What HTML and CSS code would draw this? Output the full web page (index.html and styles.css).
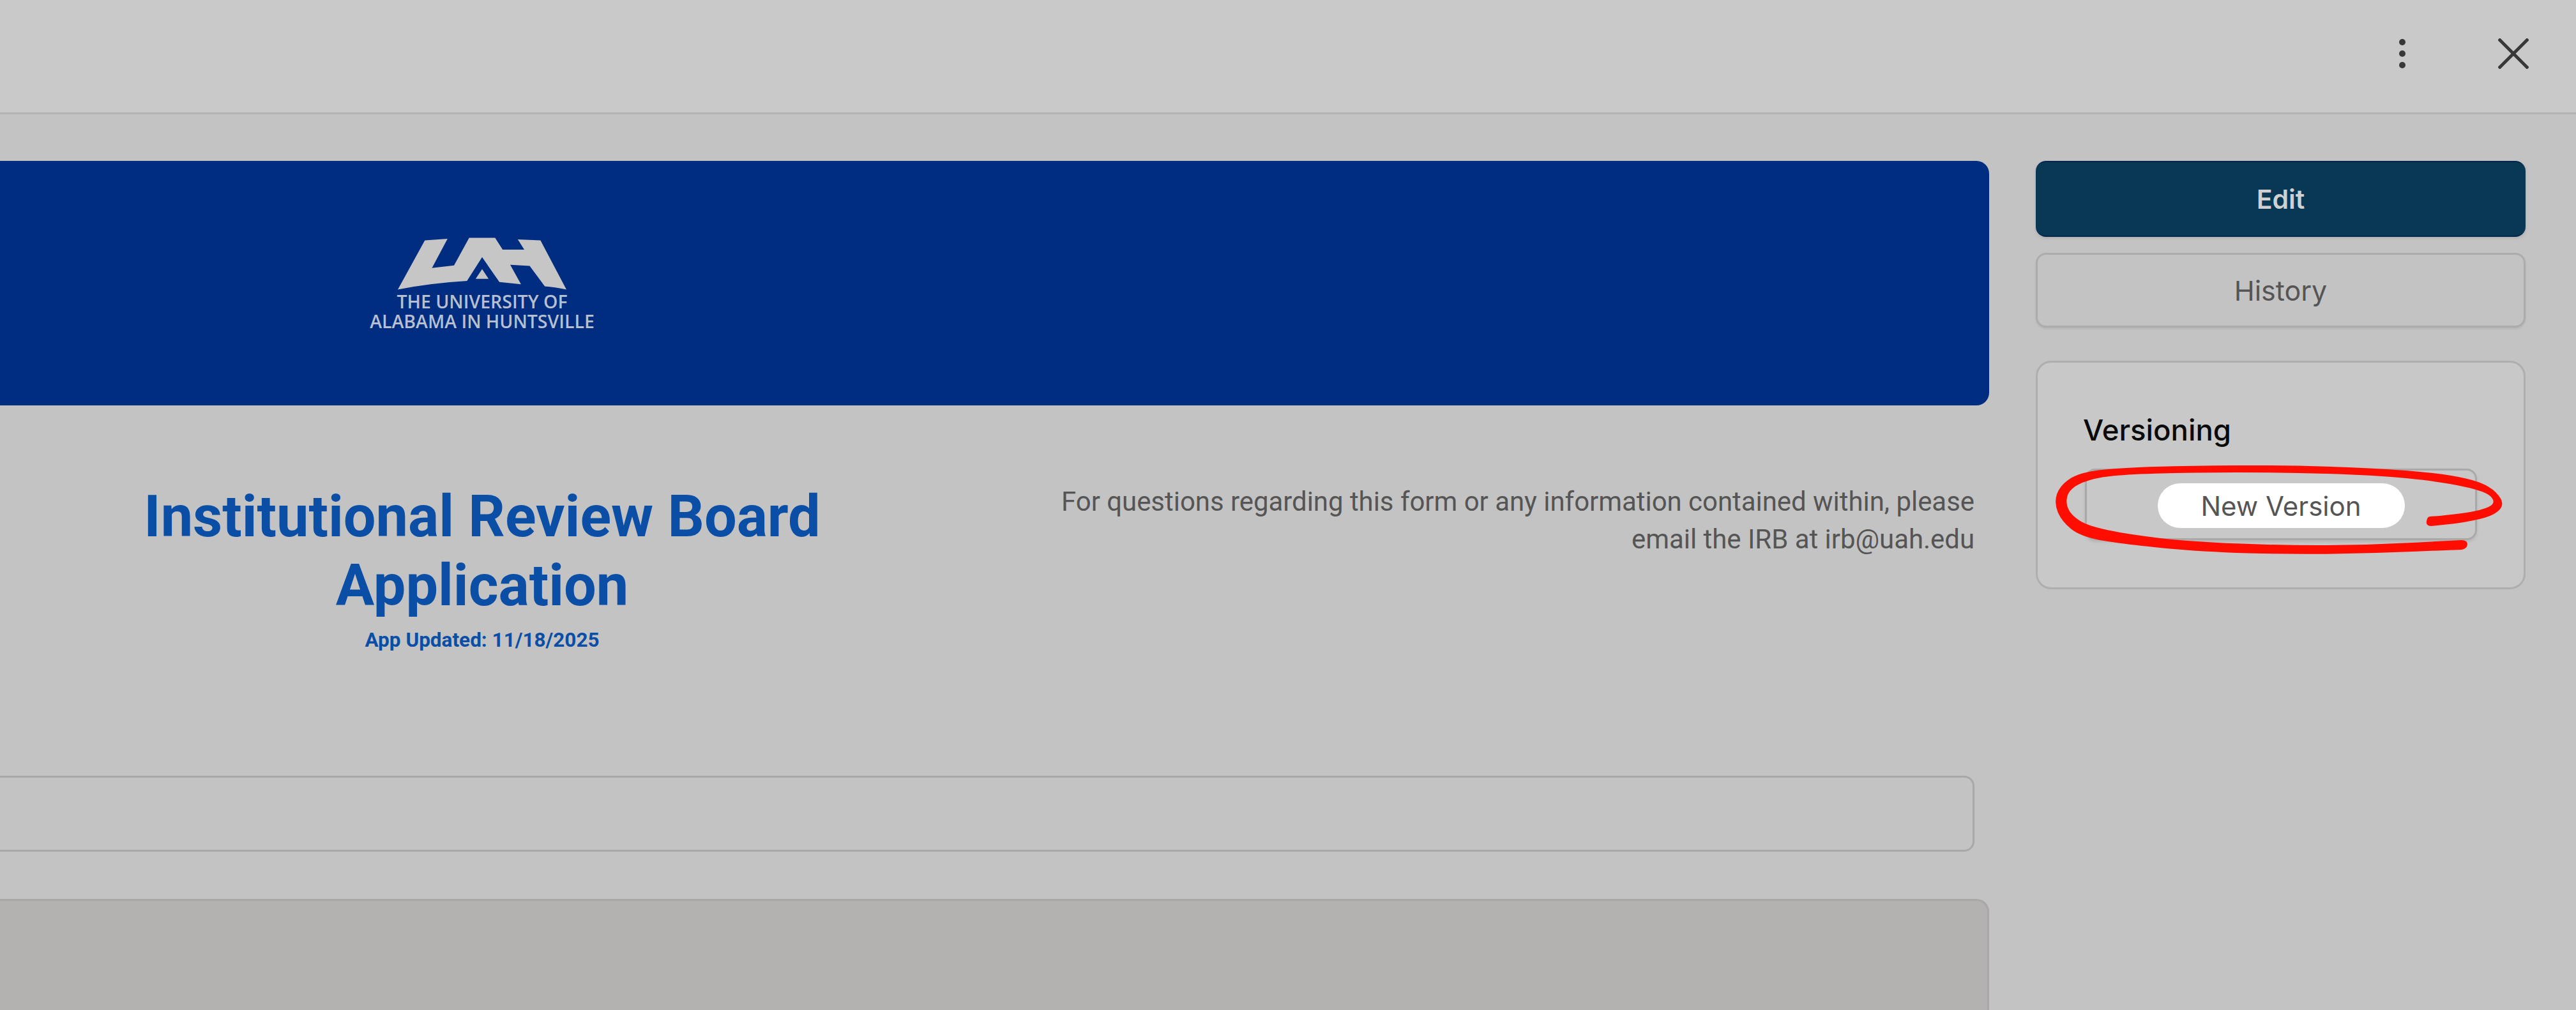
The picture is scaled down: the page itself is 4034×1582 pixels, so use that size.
FILE: index.html
```html
<!DOCTYPE html>
<html lang="en">
<head>
<meta charset="utf-8">
<title>Institutional Review Board Application</title>
<link rel="stylesheet" href="styles.css">
</head>
<body>
<header class="topbar">
  <svg class="icon-more" viewBox="0 0 20 48" aria-hidden="true"><circle cx="10" cy="6" r="5"/><circle cx="10" cy="24" r="5"/><circle cx="10" cy="42" r="5"/></svg>
  <svg class="icon-close" viewBox="0 0 48 48" aria-hidden="true"><path d="M1 1 47 47M47 1 1 47"/></svg>
</header>
<main class="page">
  <section class="content">
    <div class="banner">
      <div class="logo">
        <svg class="logo-mark" viewBox="250 100 780 240" aria-hidden="true"><path fill-rule="evenodd" d="M250 340 375 112 480 105 408 240 510 228 580 100 700 100 735 155 835 155 805 108 910 112 1030 340Q975 328 930 325L860 230 770 225 820 315 720 305 640 190 570 300Q400 310 250 340ZM610 290 640 245 670 290Z"/></svg>
        <div class="logo-text">THE UNIVERSITY OF</div>
        <div class="logo-text">ALABAMA IN HUNTSVILLE</div>
      </div>
    </div>
    <div class="intro">
      <div class="title-block">
        <h1 class="title">Institutional Review Board Application</h1>
        <div class="updated">App Updated: 11/18/2025</div>
      </div>
      <p class="contact">For questions regarding this form or any information contained within, please email the IRB at irb@uah.edu</p>
    </div>
    <div class="field"></div>
    <div class="panel"></div>
  </section>
  <aside class="sidebar">
    <button class="btn btn-primary" type="button">Edit</button>
    <button class="btn btn-outline" type="button">History</button>
    <div class="card">
      <h2 class="card-title">Versioning</h2>
      <div class="version-box"><button class="pill" type="button">New Version</button></div>
    </div>
  </aside>
</main>
<svg class="annotation" viewBox="0 0 4034 1582" aria-hidden="true"><path transform="translate(3150 540) scale(0.5638 0.3333)" d="M1160 808Q1250 795 1285 782Q1320 770 1332 755Q1345 740 1332 715Q1320 690 1260 668Q1200 645 1100 628Q1000 612 875 606Q750 600 625 600Q500 600 400 605Q300 610 255 622Q210 635 185 658Q160 680 155 712Q150 745 158 772Q165 800 188 825Q210 850 265 870Q320 890 410 908Q500 925 625 934Q750 943 875 942Q1000 940 1125 929L1250 918Q1268 920 1266 940Q1265 960 1250 963L1125 971Q1000 980 875 983Q750 985 625 978Q500 970 400 952Q300 935 245 918Q190 900 165 865Q140 830 129 788Q118 745 126 702Q135 660 162 630Q190 600 245 589Q300 578 400 573Q500 568 625 567Q750 566 875 572Q1000 578 1100 592Q1200 605 1260 628Q1320 650 1346 695Q1372 740 1358 770Q1345 800 1302 818Q1260 835 1212 844L1165 852Q1150 850 1153 828Q1155 810 1160 808Z"/></svg>
</body>
</html>
```
FILE: styles.css
```css
* { box-sizing: border-box; }
html, body { margin: 0; height: 100%; }
body {
  width: 4034px;
  height: 1582px;
  overflow: hidden;
  position: relative;
  background: #c3c3c3;
  font-family: Inter, "Liberation Sans", sans-serif;
}
.topbar {
  height: 179px;
  background: #c9c9c9;
  border-bottom: 3px solid #b3b3b3;
  display: flex;
  justify-content: flex-end;
  align-items: flex-start;
  gap: 140px;
  padding: 60px 74px 0 0;
}
.icon-more { width: 20px; height: 48px; fill: #383838; }
.icon-close { width: 48px; height: 48px; fill: none; stroke: #383838; stroke-width: 5; }
.page {
  display: flex;
  gap: 73px;
  padding-top: 73px;
}
.content { width: 3115px; flex: none; }
.banner {
  height: 383px;
  background: #002d80;
  border-radius: 0 20px 20px 0;
  display: grid;
  grid-template-columns: 1510px;
  align-content: start;
  padding-top: 120px;
}
.logo { display: flex; flex-direction: column; align-items: center; }
.logo-mark { width: 264px; height: 82px; fill: #c6c6c6; display: block; margin-bottom: 3px; }
.logo-text {
  font-family: "Open Sans", sans-serif;
  font-size: 28.5px;
  font-weight: 600;
  line-height: 31px;
  color: #b7bfd0;
  white-space: nowrap;
}
.intro {
  display: grid;
  grid-template-columns: 1510px 1fr;
  padding: 121px 23px 0 0;
  height: 580px;
}
.title-block { text-align: center; padding: 0 200px; }
.title {
  margin: 0;
  font-family: Roboto, sans-serif;
  font-size: 90px;
  line-height: 108px;
  font-weight: 700;
  color: #0a4ea6;
}
.updated {
  font-family: Roboto, sans-serif;
  font-size: 31.5px;
  line-height: 40px;
  font-weight: 700;
  color: #0a4ea6;
  margin-top: 11px;
}
.contact {
  margin: 0;
  justify-self: end;
  width: 1440px;
  text-align: right;
  font-family: Roboto, sans-serif;
  font-size: 41.9px;
  line-height: 59px;
  color: #555;
}
.field {
  margin: 0 23px 0 -20px;
  height: 119px;
  border: 3px solid #a9a7a7;
  border-radius: 16px;
}
.panel {
  margin: 74px 0 0 -20px;
  height: 174px;
  background: #b3b2b0;
  border: 3px solid #a9a7a7;
  border-bottom: 0;
  border-radius: 20px 20px 0 0;
}
.sidebar { width: 767px; flex: none; display: flex; flex-direction: column; }
.btn {
  font-family: inherit;
  border-radius: 16px;
  width: 100%;
  padding: 0;
}
.btn-primary {
  height: 119px;
  background: #083854;
  color: #d0d0d0;
  font-size: 41px;
  font-weight: 600;
  border: 0;
  border-top: 2px solid #02254f;
  border-bottom: 2px solid #02254f;
  box-shadow: 0 2px 4px #aaa;
}
.btn-outline {
  margin-top: 25px;
  height: 117px;
  background: #c3c3c3;
  color: #555;
  font-size: 43px;
  font-weight: 400;
  border: 3px solid #adacac;
  box-shadow: 0 2px 3px #b3b3b3;
}
.card {
  margin-top: 52px;
  height: 358px;
  background: #c8c8c8;
  border: 3px solid #aeaeae;
  border-radius: 24px;
  padding: 78px 74px 0;
}
.card-title {
  margin: 0 0 0 -3px;
  font-size: 45.5px;
  line-height: 56px;
  font-weight: 500;
  color: #0a0a0a;
}
.version-box {
  margin: 32px 0 0;
  width: 614px;
  height: 112px;
  border: 3px solid #a9a9a9;
  border-radius: 16px;
  display: flex;
  justify-content: center;
  padding-top: 20px;
  box-shadow: 0 3px 4px #b5b5b5;
}
.pill {
  width: 387px;
  height: 70px;
  border: 0;
  border-radius: 35px;
  background: #fff;
  font-family: inherit;
  font-size: 42px;
  color: #555;
  padding: 0;
}
.annotation {
  position: absolute;
  left: 0;
  top: 0;
  width: 4034px;
  height: 1582px;
  fill: #ff0d00;
  pointer-events: none;
}
```
